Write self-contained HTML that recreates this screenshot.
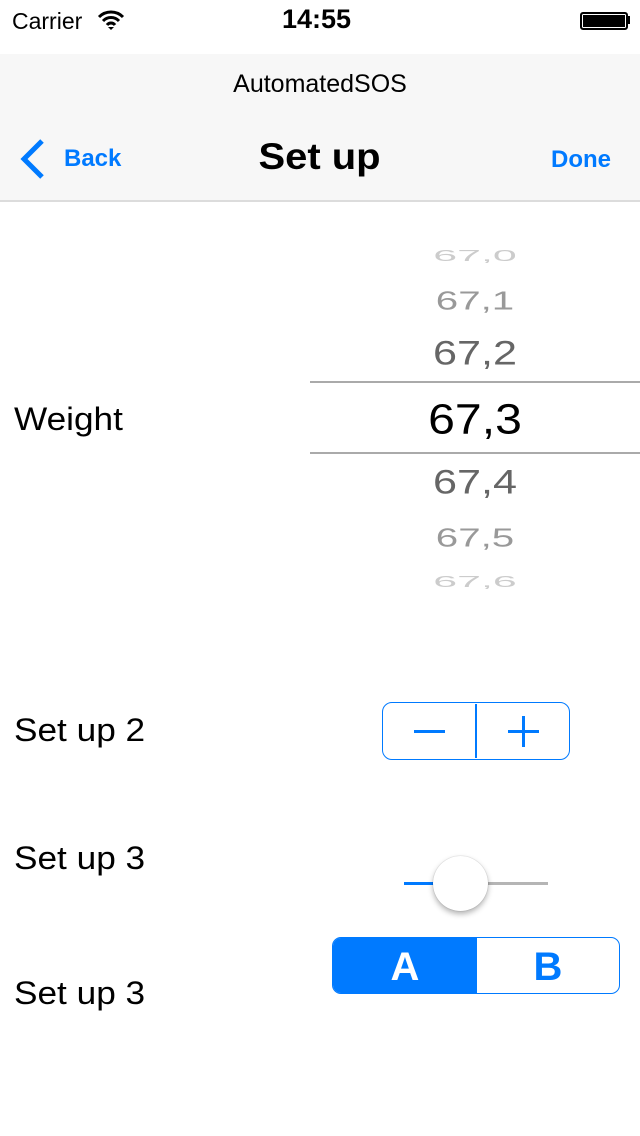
<!DOCTYPE html><html><head><style>
body{margin:0;width:640px;height:1136px;background:#fff;font-family:"Liberation Sans",sans-serif;position:relative;overflow:hidden}
.a{position:absolute;white-space:nowrap}
.l{transform:scaleX(1.1);transform-origin:0 0}
.p{position:absolute;left:475px;white-space:nowrap}
</style></head><body>
<div class="a" style="left:12px;top:8px;font-size:23px">Carrier</div>
<svg class="a" style="left:97px;top:10px" width="28" height="20" viewBox="0 0 28 20"><path d="M2 7a17 17 0 0 1 24 0M6 11a11 11 0 0 1 16 0M10 15a5 5 0 0 1 8 0" stroke="#000" stroke-width="3" fill="none"/><path d="M11 17l3 3 3-3z"/></svg>
<div class="a" style="left:282px;top:4px;font-size:27px;font-weight:bold">14:55</div>
<div class="a" style="left:580px;top:12px;width:44px;height:14px;border:2px solid #000;border-radius:3px;background:#000;box-shadow:inset 0 0 0 1px #fff"></div>
<div class="a" style="left:627px;top:16px;width:3px;height:8px;background:#000"></div>
<div class="a" style="left:0;top:54px;width:640px;height:146px;background:#f7f7f7;border-bottom:2px solid #dcdcdc"></div>
<div class="a" style="left:0;top:70px;width:640px;text-align:center;font-size:25px">AutomatedSOS</div>
<svg class="a" style="left:18px;top:138px" width="30" height="42"><path d="M24 3L6 21l18 18" stroke="#007aff" stroke-width="5" fill="none"/></svg>
<div class="a" style="left:64px;top:145px;font-size:24px;font-weight:bold;color:#007aff">Back</div>
<div class="a" style="left:0;top:136px;width:640px;text-align:center;font-size:37px;font-weight:bold"><span style="display:inline-block;transform:scaleX(1.08)">Set up</span></div>
<div class="a" style="left:551px;top:146px;font-size:24px;font-weight:bold;color:#007aff">Done</div>
<div class="p" style="top:256px;font-size:26px;color:#ccc;transform:translate(-50%,-50%) scale(1.65,.6)">67,0</div>
<div class="p" style="top:301px;font-size:31px;color:#999;transform:translate(-50%,-50%) scale(1.3,.85)">67,1</div>
<div class="p" style="top:354px;font-size:34px;color:#666;transform:translate(-50%,-50%) scaleX(1.27)">67,2</div>
<div class="a" style="left:310px;top:381px;width:330px;height:2px;background:#aaa"></div>
<div class="p" style="top:420px;font-size:43px;color:#000;transform:translate(-50%,-50%) scaleX(1.12)">67,3</div>
<div class="a" style="left:310px;top:452px;width:330px;height:2px;background:#aaa"></div>
<div class="p" style="top:483px;font-size:34px;color:#666;transform:translate(-50%,-50%) scaleX(1.27)">67,4</div>
<div class="p" style="top:538px;font-size:31px;color:#999;transform:translate(-50%,-50%) scale(1.3,.85)">67,5</div>
<div class="p" style="top:582px;font-size:26px;color:#ccc;transform:translate(-50%,-50%) scale(1.65,.6)">67,6</div>
<div class="a l" style="left:14px;top:401px;font-size:32px">Weight</div>
<div class="a l" style="left:14px;top:712px;font-size:32px">Set up 2</div>
<div class="a l" style="left:14px;top:840px;font-size:32px">Set up 3</div>
<div class="a l" style="left:14px;top:975px;font-size:32px">Set up 3</div>
<div class="a" style="left:382px;top:702px;width:186px;height:56px;border:1.5px solid #007aff;border-radius:10px"></div>
<div class="a" style="left:475px;top:704px;width:2px;height:54px;background:#007aff"></div>
<div class="a" style="left:414px;top:730px;width:31px;height:3px;background:#007aff"></div>
<div class="a" style="left:508px;top:730px;width:31px;height:3px;background:#007aff"></div>
<div class="a" style="left:522px;top:716px;width:3px;height:31px;background:#007aff"></div>
<div class="a" style="left:404px;top:882px;width:32px;height:3px;background:#007aff"></div>
<div class="a" style="left:488px;top:882px;width:60px;height:3px;background:#b5b5b5"></div>
<div class="a" style="left:433px;top:856px;width:55px;height:55px;border-radius:50%;background:#fff;box-shadow:0 3px 6px rgba(0,0,0,.3),0 0 1px rgba(0,0,0,.3)"></div>
<div class="a" style="left:332px;top:937px;width:286px;height:55px;border:1.5px solid #007aff;border-radius:9px;overflow:hidden">
<div class="a" style="left:0;top:0;width:144px;height:55px;background:#007aff;color:#fff;font-size:40px;font-weight:bold;text-align:center;line-height:58px">A</div>
<div class="a" style="left:144px;top:0;width:142px;height:55px;color:#007aff;font-size:40px;font-weight:bold;text-align:center;line-height:58px">B</div>
</div>
</body></html>
